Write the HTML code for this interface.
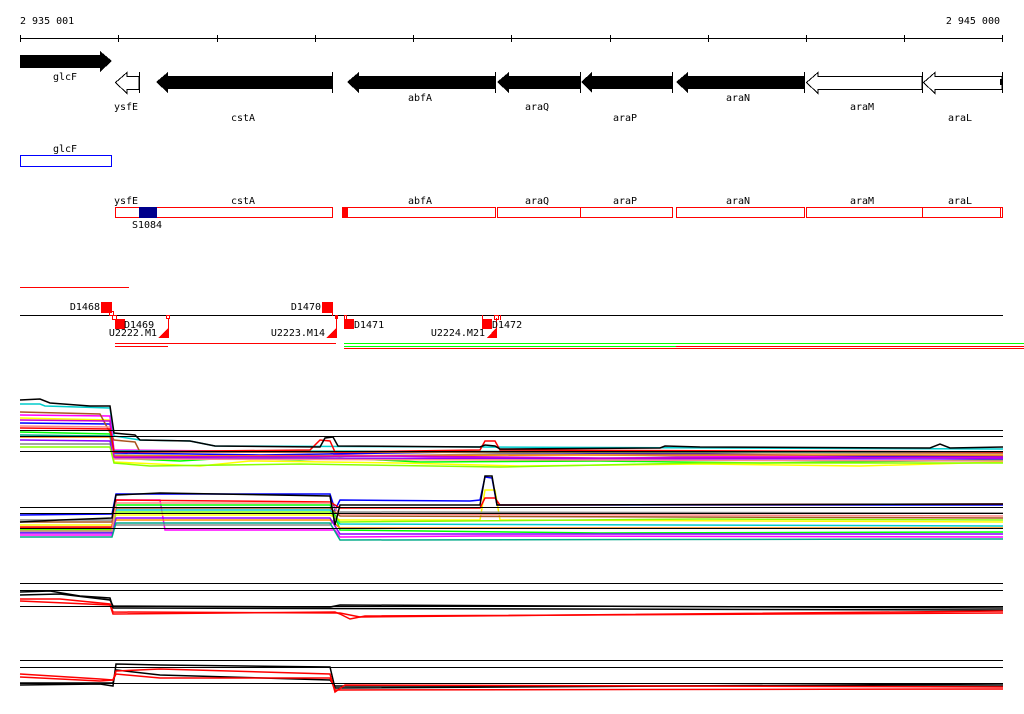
<!DOCTYPE html>
<html><head><meta charset="utf-8"><style>
html,body{margin:0;padding:0;background:#fff}
svg{display:block}
text{font-family:"DejaVu Sans Mono","Liberation Mono",monospace;font-size:10px;fill:#000}
</style></head><body>
<svg width="1024" height="714" viewBox="0 0 1024 714" xmlns="http://www.w3.org/2000/svg" shape-rendering="crispEdges">
<text x="20" y="24">2 935 001</text>
<text x="1000" y="24" text-anchor="end">2 945 000</text>
<line x1="20" y1="38.5" x2="1003" y2="38.5" stroke="#000"/>
<g stroke="#000">
<line x1="20.5" y1="35" x2="20.5" y2="42"/><line x1="118.5" y1="35" x2="118.5" y2="42"/><line x1="217.5" y1="35" x2="217.5" y2="42"/><line x1="315.5" y1="35" x2="315.5" y2="42"/><line x1="413.5" y1="35" x2="413.5" y2="42"/><line x1="511.5" y1="35" x2="511.5" y2="42"/><line x1="610.5" y1="35" x2="610.5" y2="42"/><line x1="708.5" y1="35" x2="708.5" y2="42"/><line x1="806.5" y1="35" x2="806.5" y2="42"/><line x1="904.5" y1="35" x2="904.5" y2="42"/><line x1="1002.5" y1="35" x2="1002.5" y2="42"/>
</g>
<polygon points="20,55 100,55 100,51 112,61 100,72 100,68 20,68" fill="#000"/>
<text x="65" y="80" text-anchor="middle">glcF</text>
<polygon points="115.5,82.5 127,72.5 127,76.5 139,76.5 139,89.5 127,89.5 127,93.5" fill="#fff" stroke="#000"/>
<line x1="139.5" y1="72" x2="139.5" y2="93" stroke="#000"/>
<polygon points="156,82 168,72 168,76 332,76 332,89 168,89 168,93" fill="#000"/>
<line x1="332.5" y1="72" x2="332.5" y2="93" stroke="#000"/>
<polygon points="347,82 359,72 359,76 495,76 495,89 359,89 359,93" fill="#000"/>
<line x1="495.5" y1="72" x2="495.5" y2="93" stroke="#000"/>
<polygon points="497,82 509,72 509,76 580,76 580,89 509,89 509,93" fill="#000"/>
<line x1="580.5" y1="72" x2="580.5" y2="93" stroke="#000"/>
<polygon points="581,82 592,72 592,76 672,76 672,89 592,89 592,93" fill="#000"/>
<line x1="672.5" y1="72" x2="672.5" y2="93" stroke="#000"/>
<polygon points="676,82 688,72 688,76 804,76 804,89 688,89 688,93" fill="#000"/>
<line x1="804.5" y1="72" x2="804.5" y2="93" stroke="#000"/>
<polygon points="806.5,82.5 818,72.5 818,76.5 922,76.5 922,89.5 818,89.5 818,93.5" fill="#fff" stroke="#000"/>
<line x1="922.5" y1="72" x2="922.5" y2="93" stroke="#000"/>
<polygon points="923.5,82.5 935,72.5 935,76.5 1002,76.5 1002,89.5 935,89.5 935,93.5" fill="#fff" stroke="#000"/>
<line x1="1002.5" y1="72" x2="1002.5" y2="93" stroke="#000"/>
<rect x="1000" y="79" width="2" height="6" fill="#000"/>
<text x="126" y="110" text-anchor="middle">ysfE</text>
<text x="243" y="121" text-anchor="middle">cstA</text>
<text x="420" y="101" text-anchor="middle">abfA</text>
<text x="537" y="110" text-anchor="middle">araQ</text>
<text x="625" y="121" text-anchor="middle">araP</text>
<text x="738" y="101" text-anchor="middle">araN</text>
<text x="862" y="110" text-anchor="middle">araM</text>
<text x="960" y="121" text-anchor="middle">araL</text>
<text x="65" y="152" text-anchor="middle">glcF</text>
<rect x="20.5" y="155.5" width="91" height="11" fill="none" stroke="#00f"/>
<g fill="none" stroke="#f00">
<rect x="115.5" y="207.5" width="217" height="10"/>
<rect x="342.5" y="207.5" width="153" height="10"/>
<rect x="497.5" y="207.5" width="83" height="10"/>
<rect x="580.5" y="207.5" width="92" height="10"/>
<rect x="676.5" y="207.5" width="128" height="10"/>
<rect x="806.5" y="207.5" width="116" height="10"/>
<rect x="922.5" y="207.5" width="80" height="10"/>
<line x1="1000.5" y1="207" x2="1000.5" y2="218"/>
</g>
<rect x="139" y="207" width="18" height="11" fill="#00008b"/>
<rect x="342" y="207" width="6" height="11" fill="#f00"/>
<text x="126" y="204" text-anchor="middle">ysfE</text>
<text x="243" y="204" text-anchor="middle">cstA</text>
<text x="420" y="204" text-anchor="middle">abfA</text>
<text x="537" y="204" text-anchor="middle">araQ</text>
<text x="625" y="204" text-anchor="middle">araP</text>
<text x="738" y="204" text-anchor="middle">araN</text>
<text x="862" y="204" text-anchor="middle">araM</text>
<text x="960" y="204" text-anchor="middle">araL</text>
<text x="147" y="228" text-anchor="middle">S1084</text>
<line x1="20" y1="287.5" x2="129" y2="287.5" stroke="#f00"/>
<line x1="20" y1="315.5" x2="1003" y2="315.5" stroke="#000"/>
<text x="100" y="310" text-anchor="end">D1468</text>
<rect x="101" y="302" width="11" height="11" fill="#f00"/>
<g fill="none" stroke="#f00">
<rect x="109.5" y="311.5" width="4" height="4"/><rect x="112.5" y="315.5" width="4" height="4"/>
<rect x="166.5" y="315.5" width="3" height="3"/>
<rect x="494.5" y="315.5" width="4" height="4"/>
<rect x="344.5" y="315.5" width="2" height="4"/>
</g>
<rect x="115" y="319" width="10" height="10" fill="#f00"/>
<text x="124" y="328">D1469</text>
<text x="157" y="336" text-anchor="end">U2222.M1</text>
<polygon points="158,338 168,328 168,338" fill="#f00"/>
<line x1="168.5" y1="318" x2="168.5" y2="338" stroke="#f00"/>
<text x="321" y="310" text-anchor="end">D1470</text>
<rect x="322" y="302" width="11" height="11" fill="#f00"/>
<line x1="332.5" y1="313" x2="332.5" y2="316" stroke="#f00"/>
<rect x="335" y="315" width="3" height="4" fill="#f00"/>
<line x1="336.5" y1="318" x2="336.5" y2="338" stroke="#f00"/>
<text x="325" y="336" text-anchor="end">U2223.M14</text>
<polygon points="326,338 336,328 336,338" fill="#f00"/>
<rect x="344" y="319" width="10" height="10" fill="#f00"/>
<text x="354" y="328">D1471</text>
<rect x="482" y="319" width="10" height="10" fill="#f00"/>
<line x1="482.5" y1="315" x2="482.5" y2="320" stroke="#f00"/>
<text x="485" y="336" text-anchor="end">U2224.M21</text>
<polygon points="487,338 496,328 496,338" fill="#f00"/>
<line x1="496.5" y1="318" x2="496.5" y2="338" stroke="#f00"/>
<text x="492" y="328">D1472</text>
<line x1="500.5" y1="315" x2="500.5" y2="320" stroke="#f00"/>
<g stroke-width="1">
<line x1="115" y1="343.5" x2="336" y2="343.5" stroke="#f00"/>
<line x1="115" y1="346.5" x2="168" y2="346.5" stroke="#f00"/>
<line x1="344" y1="343.5" x2="1024" y2="343.5" stroke="#0f0"/>
<line x1="344" y1="346.5" x2="676" y2="346.5" stroke="#0f0"/>
<line x1="676" y1="346.5" x2="1024" y2="346.5" stroke="#f00"/>
<line x1="344" y1="348.5" x2="1024" y2="348.5" stroke="#f00"/>
</g>
<!-- plot1 -->
<g fill="none" stroke-width="1.5" shape-rendering="auto">
<polyline stroke="#0f0" points="20,432 110,434 114,458 180,461 230,458 300,460 340,458 420,462 600,461 760,463 1003,460"/>
<polyline stroke="#ff0" points="20,418 110,420 114,462 200,466 250,461 400,463 520,466 700,464 860,466 1003,462"/>
<polyline stroke="#888" points="20,444 110,444 114,455 300,457 500,454 800,457 1003,456"/>
<polyline stroke="#f0f" points="20,415 110,416 114,450 330,452 335,455 560,459 760,456 1003,458"/>
<polyline stroke="#00f" points="20,423 110,424 114,453 260,455 460,452 1003,457"/>
<polyline stroke="#f80" points="20,437 110,437 114,456 600,455 1003,455"/>
<polyline stroke="#a52" points="20,412 100,414 114,440 135,442 140,452 1003,453"/>
<polyline stroke="#0cc" points="20,404 40,404 45,406 110,408 114,436 140,440 190,441 215,446 1003,449"/>
<polyline stroke="#80f" points="20,440 110,441 114,458 1003,459"/>
<polyline stroke="#f88" points="20,426 110,427 114,459 1003,461"/>
<polyline stroke="#0a8" points="20,435 110,436 114,451 1003,452"/>
<polyline stroke="#8f0" points="20,447 110,447 114,463 150,466 300,464 500,467 700,463 1003,463"/>
<polyline stroke="#c0c" points="20,420 110,421 114,457 400,456 600,458 1003,457"/>
<polyline stroke="#f00" points="20,428 110,429 114,452 310,450 320,440 330,441 335,452 480,450 485,441 495,441 500,450 1003,452"/>
<polyline stroke="#000" points="20,400 40,399 50,403 90,406 110,406 114,433 135,435 140,440 190,441 215,446 320,447 325,438 333,437 338,446 480,447 485,445 495,446 500,449 660,448 665,446 700,447 930,448 940,444 950,448 1003,447"/>
</g>
<g stroke="#000"><line x1="20" y1="430.5" x2="1003" y2="430.5"/><line x1="20" y1="436.5" x2="1003" y2="436.5"/><line x1="20" y1="451.5" x2="1003" y2="451.5"/></g>
<!-- plot2 -->
<g fill="none" stroke-width="1.5" shape-rendering="auto">
<polyline stroke="#f0f" points="20,535 112,535 116,500 160,500 165,530 335,530 340,537 480,536 1003,537"/>
<polyline stroke="#0f0" points="20,530 112,530 116,505 330,505 335,515 340,530 600,533 1003,532"/>
<polyline stroke="#ff0" points="20,525 112,525 116,515 330,515 340,520 480,520 485,490 495,490 500,520 1003,522"/>
<polyline stroke="#888" points="20,520 112,520 116,525 330,525 340,512 1003,513"/>
<polyline stroke="#00f" points="20,515 112,514 116,494 330,494 335,510 340,500 470,501 480,500 485,477 492,478 497,505 1003,505"/>
<polyline stroke="#f80" points="20,528 112,528 116,520 330,520 340,528 1003,528"/>
<polyline stroke="#0cc" points="20,532 112,532 116,510 330,510 340,524 1003,526"/>
<polyline stroke="#f00" points="20,527 112,527 116,500 330,502 340,508 480,508 485,498 495,498 500,505 1003,504"/>
<polyline stroke="#80f" points="20,533 112,533 116,518 330,518 340,534 1003,534"/>
<polyline stroke="#a52" points="20,522 112,522 116,508 330,508 340,516 1003,518"/>
<polyline stroke="#0a8" points="20,537 112,537 116,523 330,523 340,540 1003,539"/>
<polyline stroke="#8f0" points="20,529 112,529 116,512 330,512 340,522 700,519 1003,520"/>
<polyline stroke="#f88" points="20,531 112,531 116,503 330,503 340,514 1003,516"/>
<polyline stroke="#000" points="20,522 60,520 112,518 116,495 160,493 330,496 335,525 340,505 470,505 480,505 485,476 492,476 497,505 1003,504"/>
</g>
<g stroke="#000"><line x1="20" y1="507.5" x2="1003" y2="507.5"/><line x1="20" y1="513.5" x2="1003" y2="513.5"/><line x1="20" y1="528.5" x2="1003" y2="528.5"/></g>
<!-- plot3 -->
<g fill="none" stroke-width="1.5" shape-rendering="auto">
<polyline stroke="#000" points="20,592 50,591 80,596 110,598 113,608 1003,610"/>
<polyline stroke="#000" points="20,595 60,594 110,600 113,606 330,607 340,605 1003,608"/>
<polyline stroke="#f00" points="20,599 60,599 110,604 113,612 340,613 360,617 1003,611"/>
<polyline stroke="#f00" points="20,601 110,605 113,614 335,612 340,614 350,619 365,616 1003,613"/>
</g>
<g stroke="#000"><line x1="20" y1="583.5" x2="1003" y2="583.5"/><line x1="20" y1="590.5" x2="1003" y2="590.5"/><line x1="20" y1="606.5" x2="1003" y2="606.5"/></g>
<!-- plot4 -->
<g fill="none" stroke-width="1.5" shape-rendering="auto">
<polyline stroke="#000" points="20,685 100,684 113,686 116,664 160,665 330,667 335,688 1003,684"/>
<polyline stroke="#000" points="20,683 113,683 116,670 160,675 330,680 335,686 1003,686"/>
<polyline stroke="#f00" points="20,674 100,679 113,680 116,671 160,669 330,674 335,692 345,685 1003,687"/>
<polyline stroke="#f00" points="20,677 100,681 113,680 116,674 160,678 330,678 335,690 1003,689"/>
</g>
<g stroke="#000"><line x1="20" y1="660.5" x2="1003" y2="660.5"/><line x1="20" y1="667.5" x2="1003" y2="667.5"/><line x1="20" y1="683.5" x2="1003" y2="683.5"/></g>
</svg>
</body></html>
